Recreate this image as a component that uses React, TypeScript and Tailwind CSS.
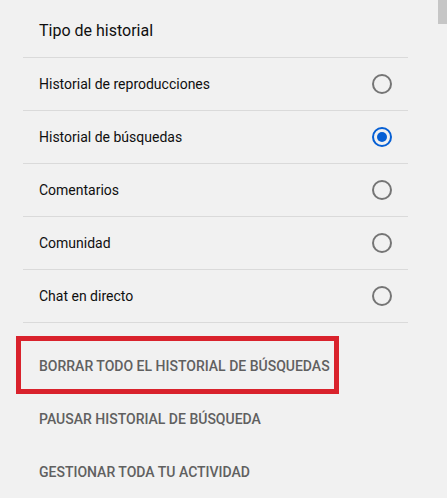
import React, { useState } from "react";

const options = [
  "Historial de reproducciones",
  "Historial de búsquedas",
  "Comentarios",
  "Comunidad",
  "Chat en directo",
];

const actions = [
  "Borrar todo el historial de búsquedas",
  "Pausar historial de búsqueda",
  "Gestionar toda tu actividad",
];

const Radio = ({ checked }: { checked: boolean }) =>
  checked ? (
    <span className="flex h-5 w-5 items-center justify-center rounded-full border-2 border-[#065fd4]">
      <span className="h-[10px] w-[10px] rounded-full bg-[#065fd4]" />
    </span>
  ) : (
    <span className="h-5 w-5 rounded-full border-2 border-[#757575]" />
  );

export default function App() {
  const [selected, setSelected] = useState(1);

  return (
    <div
      className="relative h-[498px] w-[447px] overflow-hidden bg-[#f1f1f1]"
      style={{ fontFamily: "Roboto, 'Liberation Sans', sans-serif" }}
    >
      {/* scrollbar thumb */}
      <div className="absolute right-0 top-0 h-[24px] w-[9px] bg-[#c6c6c6]" />

      <div className="ml-[23px] w-[385px]">
        <div className="flex h-[58px] items-center border-b border-[#dadada] px-4 pt-[4px] text-[16px] text-[#0f0f0f]">
          Tipo de historial
        </div>

        {options.map((label, i) => (
          <button
            key={label}
            onClick={() => setSelected(i)}
            className="flex h-[53px] w-full items-center justify-between border-b border-[#dadada] pl-4 pr-4 text-left text-[14px] text-[#0f0f0f]"
          >
            <span>{label}</span>
            <Radio checked={selected === i} />
          </button>
        ))}

        <div className="pt-[17px]">
          {actions.map((label, i) => (
            <div
              key={label}
              className="relative flex h-[53px] items-center px-4 text-[14px] font-medium uppercase text-[#606060]"
            >
              {i === 0 && (
                <div className="absolute -left-[7px] -top-[4px] h-[58px] w-[323px] border-[5px] border-[#d9222c]" />
              )}
              {label}
            </div>
          ))}
        </div>
      </div>
    </div>
  );
}
